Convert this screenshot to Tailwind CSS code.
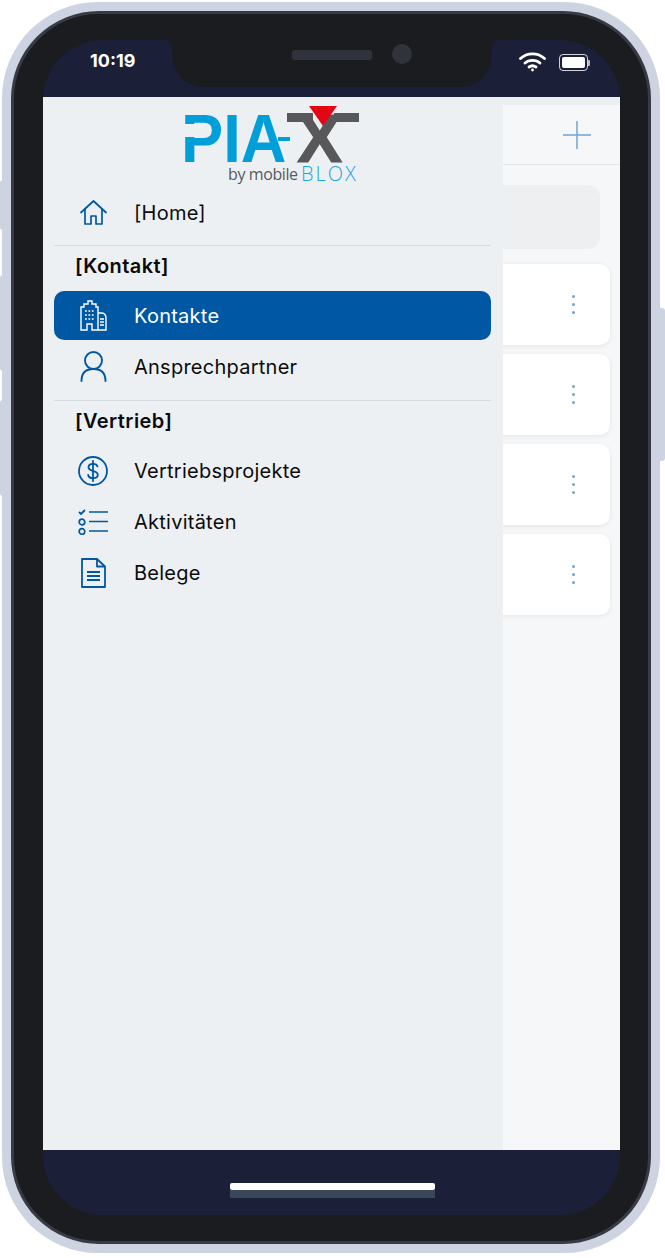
<!DOCTYPE html>
<html lang="de">
<head>
    <meta charset="UTF-8">
    <meta name="viewport" content="width=device-width, initial-scale=1.0">
    <title>PIA-X</title>
    <script src="https://cdn.jsdelivr.net/npm/@tailwindcss/browser@4"></script>
</head>
<body class="bg-white font-['Inter',sans-serif]">
<div class="relative w-[665px] h-[1258px] overflow-hidden">
    <!-- side buttons -->
    <div class="absolute left-0 top-[180px] w-[6px] h-[50px] rounded-l-[3px] bg-[#cdd3e0]"></div>
    <div class="absolute left-0 top-[275px] w-[6px] h-[96px] rounded-l-[3px] bg-[#cdd3e0]"></div>
    <div class="absolute left-0 top-[400px] w-[6px] h-[96px] rounded-l-[3px] bg-[#cdd3e0]"></div>
    <div class="absolute left-[656px] top-[308px] w-[9px] h-[153px] rounded-r-[3px] bg-[#cdd3e0]"></div>

    <!-- phone frame -->
    <div class="absolute left-[2px] top-[2px] w-[658px] h-[1251px] rounded-[96px] bg-[#cdd3e0] p-[9px]">
        <div class="w-[640px] h-[1233px] rounded-[88px] border-[3px] border-[#383a46] bg-[#1b1c20] pl-[29px] pt-[26px]">
            <div class="relative w-[577px] h-[1175px] rounded-[60px] overflow-hidden bg-[#1b2038] flex flex-col">

                <!-- status bar -->
                <div class="h-[57px] shrink-0 flex items-start justify-between pl-[47px] pr-[30px]">
                    <span class="mt-[10px] text-[18px] leading-[22px] font-bold text-white">10:19</span>
                    <div class="flex items-start gap-[13px] mt-[11px]">
                        <svg width="27" height="21" viewBox="0 0 27 21" fill="none" stroke="#fff" stroke-width="2.8" stroke-linecap="round">
                            <path d="M1.5 7.5C8 1.2 19 1.2 25.5 7.5"/>
                            <path d="M6 12C10 8.4 17 8.4 21 12"/>
                            <path d="M10 16C12 14.6 15 14.6 17 16"/>
                            <circle cx="13.5" cy="19" r="1.4" fill="#fff" stroke="none"/>
                        </svg>
                        <div class="flex items-center mt-[3px]">
                            <div class="w-[29px] h-[17px] rounded-[4px] border border-white/80 p-[2px]">
                                <div class="w-full h-full rounded-[2px] bg-white"></div>
                            </div>
                            <div class="w-[2px] h-[6px] rounded-r-[1px] bg-white/70"></div>
                        </div>
                    </div>
                </div>

                <!-- notch -->
                <svg class="absolute left-[120px] top-0" width="338" height="47" viewBox="0 0 338 47">
                    <path fill="#1b1c20" d="M0 0C6 0 9 3 9 9V14C9 33 22 47 41 47H297C316 47 329 33 329 14V9C329 3 332 0 338 0Z"/>
                </svg>
                <div class="absolute left-[249px] top-[10px] w-[80px] h-[10px] rounded-[3px] bg-[#31333c]"></div>
                <div class="absolute left-[349px] top-[4px] w-[20px] h-[20px] rounded-full bg-[#31333c]"></div>

                <!-- page behind the drawer -->
                <div class="relative h-[1053px] shrink-0 bg-[#f5f7f9] overflow-hidden">
                    <div class="h-[8px] bg-[#edf0f3]"></div>
                    <div class="h-[60px] border-b border-[#e3e6ea] flex items-center justify-end pr-[29px]">
                        <svg width="28" height="28" viewBox="0 0 28 28" stroke="#6ea5d5" stroke-width="1.5">
                            <path d="M14 0V28M0 14H28"/>
                        </svg>
                    </div>
                    <div class="ml-[400px] mr-[20px] mt-[20px] h-[64px] rounded-[12px] bg-[#eeeff1]"></div>
                    <div class="ml-[400px] mr-[10px] mt-[15px] flex flex-col gap-[9px]">
                        <div class="h-[81px] rounded-[10px] bg-white shadow-[0_1px_5px_rgba(0,0,0,0.08)] flex flex-col items-end justify-center gap-[5px] pr-[35px]">
                            <div class="w-[3px] h-[3px] rounded-full bg-[#6fa3d6]"></div>
                            <div class="w-[3px] h-[3px] rounded-full bg-[#6fa3d6]"></div>
                            <div class="w-[3px] h-[3px] rounded-full bg-[#6fa3d6]"></div>
                        </div>
                        <div class="h-[81px] rounded-[10px] bg-white shadow-[0_1px_5px_rgba(0,0,0,0.08)] flex flex-col items-end justify-center gap-[5px] pr-[35px]">
                            <div class="w-[3px] h-[3px] rounded-full bg-[#6fa3d6]"></div>
                            <div class="w-[3px] h-[3px] rounded-full bg-[#6fa3d6]"></div>
                            <div class="w-[3px] h-[3px] rounded-full bg-[#6fa3d6]"></div>
                        </div>
                        <div class="h-[81px] rounded-[10px] bg-white shadow-[0_1px_5px_rgba(0,0,0,0.08)] flex flex-col items-end justify-center gap-[5px] pr-[35px]">
                            <div class="w-[3px] h-[3px] rounded-full bg-[#6fa3d6]"></div>
                            <div class="w-[3px] h-[3px] rounded-full bg-[#6fa3d6]"></div>
                            <div class="w-[3px] h-[3px] rounded-full bg-[#6fa3d6]"></div>
                        </div>
                        <div class="h-[81px] rounded-[10px] bg-white shadow-[0_1px_5px_rgba(0,0,0,0.08)] flex flex-col items-end justify-center gap-[5px] pr-[35px]">
                            <div class="w-[3px] h-[3px] rounded-full bg-[#6fa3d6]"></div>
                            <div class="w-[3px] h-[3px] rounded-full bg-[#6fa3d6]"></div>
                            <div class="w-[3px] h-[3px] rounded-full bg-[#6fa3d6]"></div>
                        </div>
                    </div>

                    <!-- drawer -->
                    <div class="absolute left-0 top-0 bottom-0 w-[460px] bg-[#edf0f3] pl-[11px] pr-[12px] text-[20px] tracking-[0.25px] text-[#0b0b0b]">
                        <!-- logo -->
                        <div class="relative h-[90px] tracking-normal">
                            <span class="absolute left-[127px] top-[16px] origin-left scale-x-[0.93] text-[68px] leading-[50px] font-bold font-['Liberation_Sans',sans-serif] text-[#009fda]">PIA</span>
                            <div class="absolute left-[131px] top-[27px] w-[11px] h-[13px] bg-[#edf0f3]"></div>
                            <div class="absolute left-[224px] top-[40px] w-[12px] h-[4px] bg-[#009fda]"></div>
                            <span class="absolute left-[243px] top-[16px] text-[68px] leading-[50px] font-bold font-['Liberation_Sans',sans-serif] [-webkit-text-stroke:1px_#58585a] text-[#58585a]">X</span>
                            <div class="absolute left-[233px] top-[16px] w-[26px] h-[9px] bg-[#58585a]"></div>
                            <div class="absolute left-[280px] top-[16px] w-[25px] h-[9px] bg-[#58585a]"></div>
                            <svg class="absolute left-[255px] top-[9px]" width="28" height="20" viewBox="0 0 28 20">
                                <path fill="#e30613" d="M0 0H28L14 20Z"/>
                            </svg>
                            <span class="absolute left-[174px] top-[67px] text-[16px] leading-[20px] tracking-[-0.4px] font-['Open_Sans',sans-serif] text-[#58585a]">by mobile</span>
                            <span class="absolute left-[247px] top-[67px] text-[20px] leading-[20px] tracking-[2px] font-light font-['Open_Sans',sans-serif] text-[#1da7dc]">BLOX</span>
                        </div>

                        <div class="h-[51px] flex items-center pl-[22px]">
                            <div class="w-[34px] flex justify-center mr-[24px]">
                                <svg width="27" height="25" viewBox="0 0 27 25" fill="none" stroke="#0057a3" stroke-width="1.7" stroke-linejoin="round" stroke-linecap="round">
                                    <path d="M1 12.5L13.5 1L26 12.5"/>
                                    <path d="M5 9V24H11V16H16V24H22V9"/>
                                </svg>
                            </div>
                            <span>[Home]</span>
                        </div>
                        <div class="mt-[7px] h-px bg-[#d5d8dc]"></div>
                        <div class="h-[45px] pl-[21px] pt-[8px] leading-[24px] font-semibold tracking-[0.45px]">[Kontakt]</div>
                        <div class="h-[49px] rounded-[10px] bg-[#0057a3] flex items-center pl-[22px] text-white">
                            <div class="w-[34px] flex justify-center mr-[24px]">
                                <svg width="27" height="31" viewBox="0 0 27 31" fill="none" stroke="#fff" stroke-width="1.4">
                                    <path d="M1 30V7H4V4H8V1H12V4H16V7H18V30H12V24H7V30Z"/>
                                    <path d="M18 13H21C24 13 26 15 26 18V30H18" />
                                    <path stroke-width="1.6" stroke-dasharray="1.8 1.6" d="M5 11H15M5 15H15M5 19H15"/>
                                    <path stroke-width="1.4" d="M20 19H24M20 22H24M20 25H24"/>
                                </svg>
                            </div>
                            <span>Kontakte</span>
                        </div>
                        <div class="mt-px h-[51px] flex items-center pl-[22px]">
                            <div class="w-[34px] flex justify-center mr-[24px]">
                                <svg width="27" height="31" viewBox="0 0 27 31" fill="none" stroke="#0057a3" stroke-width="1.9" stroke-linecap="round">
                                    <circle cx="13.5" cy="9.5" r="8.5"/>
                                    <path d="M1.5 30C1.5 22 6 18 13.5 18S25.5 22 25.5 30"/>
                                </svg>
                            </div>
                            <span>Ansprechpartner</span>
                        </div>
                        <div class="mt-[8px] h-px bg-[#d5d8dc]"></div>
                        <div class="h-[44px] pl-[21px] pt-[8px] leading-[24px] font-semibold tracking-[0.45px]">[Vertrieb]</div>
                        <div class="h-[51px] flex items-center pl-[22px]">
                            <div class="w-[34px] flex justify-center mr-[24px]">
                                <svg width="30" height="30" viewBox="0 0 30 30" fill="none" stroke="#0057a3" stroke-width="1.8" stroke-linecap="round">
                                    <circle cx="15" cy="15" r="14"/>
                                    <path d="M19.5 10.5C19 8.5 17 7.8 15 7.8C12.5 7.8 10.5 9 10.5 11.2C10.5 16 19.8 13.8 19.8 18.8C19.8 21 17.6 22.2 15 22.2C12.6 22.2 10.6 21.2 10.2 19"/>
                                    <path d="M15 5V25"/>
                                </svg>
                            </div>
                            <span>Vertriebsprojekte</span>
                        </div>
                        <div class="h-[51px] flex items-center pl-[22px]">
                            <div class="w-[34px] flex justify-center mr-[24px]">
                                <svg width="30" height="26" viewBox="0 0 30 26" fill="none" stroke="#0057a3" stroke-width="1.7">
                                    <path stroke-width="1.8" d="M1 3L3 5L7 1"/>
                                    <circle cx="4" cy="13" r="2.8"/>
                                    <circle cx="4" cy="22.5" r="2.8"/>
                                    <path d="M11 3H30M11 12.5H30M11 22H30"/>
                                </svg>
                            </div>
                            <span>Aktivitäten</span>
                        </div>
                        <div class="h-[51px] flex items-center pl-[22px]">
                            <div class="w-[34px] flex justify-center mr-[24px]">
                                <svg width="25" height="30" viewBox="0 0 25 30" fill="none" stroke="#0057a3" stroke-width="1.8" stroke-linejoin="round">
                                    <path d="M1 1H16L24 8.5V29H1Z"/>
                                    <path d="M16 1V8.5H24"/>
                                    <path d="M6 14H19M6 18H19M6 22H19"/>
                                </svg>
                            </div>
                            <span>Belege</span>
                        </div>
                    </div>
                </div>

                <!-- bottom bar -->
                <div class="flex-1 flex flex-col items-center pl-[2px] pt-[33px]">
                    <div class="w-[205px] h-[7px] rounded-[2px] bg-white"></div>
                    <div class="w-[205px] h-[8px] bg-[#3a465a]"></div>
                </div>
            </div>
        </div>
    </div>
</div>
</body>
</html>
